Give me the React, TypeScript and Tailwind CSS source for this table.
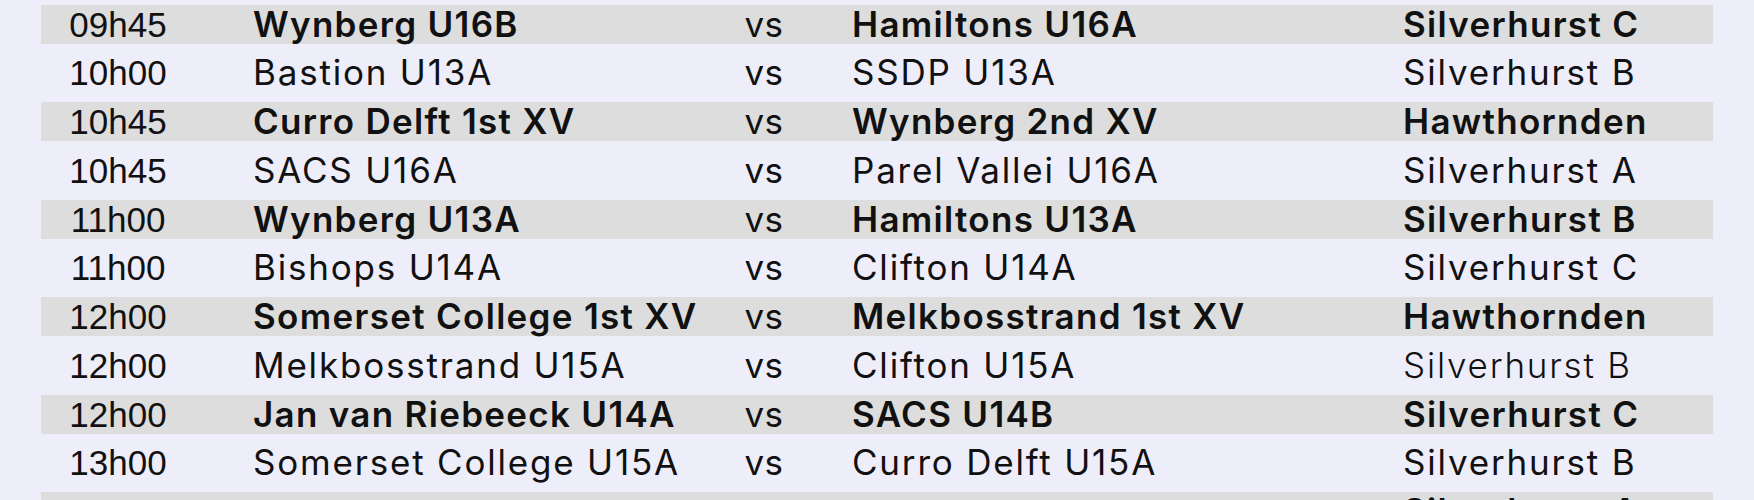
const fixtures = [
  { time: '09h45', home: 'Wynberg U16B', away: 'Hamiltons U16A', venue: 'Silverhurst C' },
  { time: '10h00', home: 'Bastion U13A', away: 'SSDP U13A', venue: 'Silverhurst B' },
  { time: '10h45', home: 'Curro Delft 1st XV', away: 'Wynberg 2nd XV', venue: 'Hawthornden' },
  { time: '10h45', home: 'SACS U16A', away: 'Parel Vallei U16A', venue: 'Silverhurst A' },
  { time: '11h00', home: 'Wynberg U13A', away: 'Hamiltons U13A', venue: 'Silverhurst B' },
  { time: '11h00', home: 'Bishops U14A', away: 'Clifton U14A', venue: 'Silverhurst C' },
  { time: '12h00', home: 'Somerset College 1st XV', away: 'Melkbosstrand 1st XV', venue: 'Hawthornden' },
  { time: '12h00', home: 'Melkbosstrand U15A', away: 'Clifton U15A', venue: 'Silverhurst B', light: true },
  { time: '12h00', home: 'Jan van Riebeeck U14A', away: 'SACS U14B', venue: 'Silverhurst C' },
  { time: '13h00', home: 'Somerset College U15A', away: 'Curro Delft U15A', venue: 'Silverhurst B' },
  { time: '', home: '', away: '', venue: 'Silverhurst A' },
];

export default function App() {
  return (
    <div className="h-[500px] overflow-hidden bg-[#eeeefa] text-[#111] font-['Inter',sans-serif]">
      <div className="flex flex-col gap-[9.75px] px-[41px] pt-[4.5px]">
        {fixtures.map((f, i) => {
          const striped = i % 2 === 0;
          return (
            <div
              key={i}
              className={`flex items-center h-[39px] shrink-0 text-[35px] leading-[39px] ${striped ? 'bg-[#dddddd] font-semibold tracking-[1.3px]' : 'font-normal tracking-[1.8px]'}`}
            >
              <div className="w-[154px] shrink-0 text-center font-['Liberation_Sans',sans-serif] font-normal tracking-normal">{f.time}</div>
              <div className="ml-[58px] w-[467px] shrink-0 whitespace-nowrap">{f.home}</div>
              <div className="w-[88px] shrink-0 text-center font-normal tracking-[0.5px]">{f.time ? 'vs' : ''}</div>
              <div className="ml-[44px] w-[551px] shrink-0 whitespace-nowrap">{f.away}</div>
              <div className={`flex-1 whitespace-nowrap ${f.light ? 'font-light' : ''}`}>{f.venue}</div>
            </div>
          );
        })}
      </div>
    </div>
  );
}
